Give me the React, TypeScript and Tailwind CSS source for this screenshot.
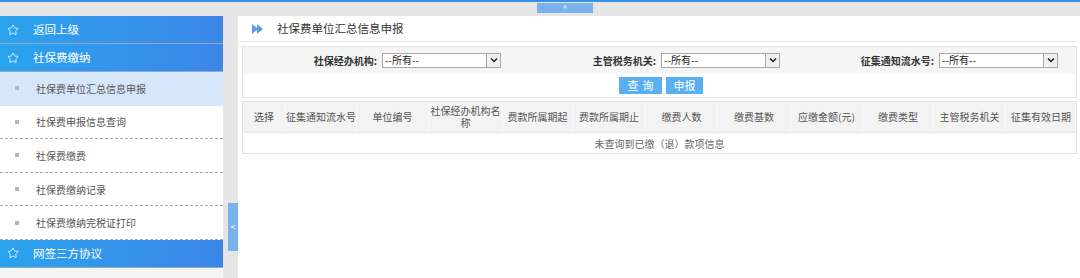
import React from "react";
import { Star } from "lucide-react";

const font = { fontFamily: '"Noto Sans CJK SC", "Noto Sans", sans-serif' };

const subItems = [
  "社保费单位汇总信息申报",
  "社保费申报信息查询",
  "社保费缴费",
  "社保费缴纳记录",
  "社保费缴纳完税证打印",
];

const columns = [
  { title: "选择", w: "w-[43px]" },
  { title: "征集通知流水号", w: "w-[71px]" },
  { title: "单位编号", w: "w-[72px]" },
  { title: "社保经办机构名\n称", w: "w-[74px]" },
  { title: "费款所属期起", w: "w-[70px]" },
  { title: "费款所属期止", w: "w-[73px]" },
  { title: "缴费人数", w: "w-[72px]" },
  { title: "缴费基数", w: "w-[73px]" },
  { title: "应缴金额(元)", w: "w-[72px]" },
  { title: "缴费类型", w: "w-[71px]" },
  { title: "主管税务机关", w: "w-[72px]" },
  { title: "征集有效日期", w: "flex-1" },
];

const MenuHeader = ({ label }: { label: string }) => (
  <div className="h-[28px] flex items-center bg-gradient-to-r from-[#2aa3ee] to-[#3b86e8] border-b border-[#8fa9c9] text-white text-[11.5px]">
    <Star size={12} strokeWidth={1.6} className="ml-[7px]" />
    <span className="ml-[14px]">{label}</span>
  </div>
);

const SelectBox = () => (
  <div className="w-[119px] h-[15px] border border-[#a9a9a9] bg-white flex items-center justify-between text-[10px] text-[#222] leading-none">
    <span className="pl-[2px]">--所有--</span>
    <span className="w-[14px] h-[13px] border-l border-[#a9a9a9] bg-[#f0f0f0] flex items-center justify-center">
      <svg width="8" height="6" viewBox="0 0 8 6">
        <path d="M1 1.5 L4 4.5 L7 1.5" stroke="#222" strokeWidth="1.5" fill="none" />
      </svg>
    </span>
  </div>
);

const FormField = ({ label, w }: { label: string; w: string }) => (
  <div className={`${w} flex items-center justify-end gap-[5px]`}>
    <span className="text-[10px] font-bold text-[#333]">{label}</span>
    <SelectBox />
  </div>
);

export default function App() {
  return (
    <div className="w-[1080px] h-[278px] bg-[#e6e6e6] overflow-hidden flex flex-col" style={font}>
      {/* top bar */}
      <div className="h-[2px] bg-[#3d8fe0]" />
      <div className="h-[14px] flex justify-center">
        <div className="ml-[50px] mt-[1px] w-[56px] h-[10px] bg-[#7ab3ec] text-white text-[8px] leading-[10px] text-center">^</div>
      </div>

      <div className="flex flex-1 min-h-0">
        {/* sidebar */}
        <div className="w-[223px] bg-[#f4f4f4] flex flex-col">
          <MenuHeader label="返回上级" />
          <MenuHeader label="社保费缴纳" />
          {subItems.map((s, i) => (
            <div
              key={s}
              className={`h-[33.6px] flex items-center text-[10px] text-[#555] border-b border-dashed border-[#aaa] ${
                i === 0 ? "bg-[#d6e7fb] border-transparent" : "bg-white"
              }`}
            >
              <span className="ml-[15px] w-[4px] h-[4px] bg-[#b5b5b5]" />
              <span className="ml-[17px]">{s}</span>
            </div>
          ))}
          <MenuHeader label="网签三方协议" />
        </div>

        {/* gutter */}
        <div className="w-[15px] flex flex-col">
          <div className="ml-[5px] mt-[187px] w-[10px] h-[48px] bg-[#7ab3ec] flex items-center justify-center text-white text-[9px]">
            &lt;
          </div>
        </div>

        {/* main */}
        <div className="flex-1 bg-white flex flex-col pr-[3px]">
          <div className="h-[26px] flex items-center border-b border-[#e6e6e6]">
            <svg width="12" height="10" viewBox="0 0 12 10" className="ml-[14px]">
              <path d="M0 0 L6 5 L0 10 Z" fill="#5b9be6" />
              <path d="M5 0 L11 5 L5 10 Z" fill="#5b9be6" />
            </svg>
            <span className="ml-[13px] text-[11.5px] text-[#333]">社保费单位汇总信息申报</span>
          </div>

          <div className="ml-[4px] mt-[4px] border border-[#e2e2e2]">
            <div className="h-[26px] bg-[#f5f5f5] flex items-center">
              <FormField label="社保经办机构:" w="w-[258px]" />
              <FormField label="主管税务机关:" w="w-[279px]" />
              <FormField label="征集通知流水号:" w="w-[278px]" />
            </div>
            <div className="h-[24px] flex items-center justify-center gap-[4px] pl-[3px]">
              <button className="w-[43px] h-[17px] bg-[#5aaff0] text-white text-[11px] leading-none tracking-[4px] pl-[4px]">查询</button>
              <button className="w-[37px] h-[17px] bg-[#5aaff0] text-white text-[11px] leading-none">申报</button>
            </div>
          </div>

          <div className="ml-[4px] mt-[3px] border border-[#e2e2e2]">
            <div className="h-[30px] flex bg-[#f3f3f3]">
              {columns.map((c, i) => (
                <div
                  key={c.title}
                  className={`${c.w} flex items-center justify-center text-center text-[10px] leading-[12px] text-[#555] whitespace-pre-line ${
                    i < columns.length - 1 ? "border-r border-[#fbfbfb]" : ""
                  }`}
                >
                  {c.title}
                </div>
              ))}
            </div>
            <div className="h-[21px] border-t border-[#e6e6e6] flex items-center justify-center text-[10px] text-[#666]">
              未查询到已缴（退）款项信息
            </div>
          </div>
        </div>
      </div>
    </div>
  );
}
